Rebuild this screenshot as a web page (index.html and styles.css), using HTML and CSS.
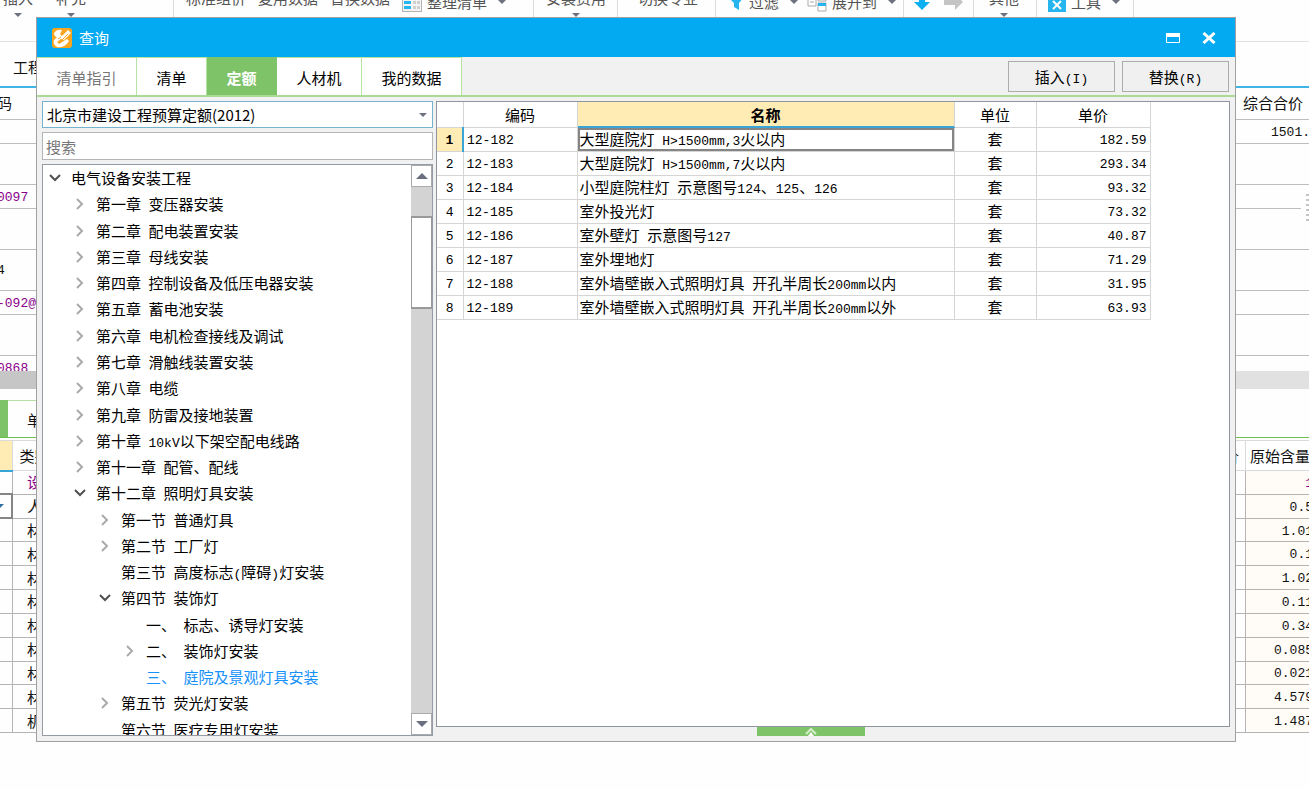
FILE: index.html
```html
<!DOCTYPE html>
<html lang="zh-CN">
<head>
<meta charset="utf-8">
<title>查询</title>
<link rel="stylesheet" href="styles.css">
</head>
<body>
<main class="app">
  <nav class="ribbon">
    <div class="group g-insert">
      <button class="stack">插入<i class="caret"></i></button>
      <button class="stack">补充<i class="caret"></i></button>
    </div>
    <div class="group g-data">
      <button class="stack">标准组价</button>
      <button class="stack">复用数据</button>
      <button class="stack">替换数据</button>
      <button class="inline">
        <svg width="20" height="20" viewBox="0 0 20 20"><rect x=".5" y=".5" width="19" height="19" fill="#f4f4f4" stroke="#b4b4b4"/><path d="M2 3h7v3H2zM2 9h7v3H2zM2 14h7v3H2z" fill="#25b5ef"/><path d="M11 3h3v3h-3zM15 3h3v3h-3zM11 9h3v3h-3zM15 9h3v3h-3zM11 14h3v3h-3zM15 14h3v3h-3z" fill="#d0d0d0"/></svg>
        整理清单<i class="caret"></i></button>
    </div>
    <div class="group g-fee"><button class="stack">安装费用<i class="caret"></i></button></div>
    <div class="group g-major"><button class="stack">切换专业</button></div>
    <div class="group g-filter">
      <button class="inline">
        <svg width="16" height="20" viewBox="0 0 16 20"><path d="M0 5h16l-5 6v7l-5-3v-4z" fill="#25b5ef"/></svg>
        过滤<i class="caret"></i></button>
      <button class="inline">
        <svg width="20" height="20" viewBox="0 0 20 20"><path d="M1 4h8v10H1zM11 3h8v6h-8zM11 11h8v8h-8z" fill="#fff" stroke="#aaa"/><path d="M11 11h8v3h-8z" fill="#25b5ef"/><path d="M3 10h4" stroke="#aaa"/></svg>
        展开到<i class="caret"></i></button>
    </div>
    <div class="group g-move">
      <button class="inline" aria-label="下移"><svg width="18" height="20" viewBox="0 0 18 20"><path d="M6 2h6v8h5l-8 8-8-8h5z" fill="#0cb0f2"/></svg></button>
      <button class="inline" aria-label="右移"><svg width="20" height="20" viewBox="0 0 20 20"><path d="M0 7h11V2l8 8-8 8v-5H0z" fill="#c4c4c4"/></svg></button>
    </div>
    <div class="group g-other"><button class="stack">其他<i class="caret"></i></button></div>
    <div class="group g-tool">
      <button class="inline">
        <svg width="18" height="20" viewBox="0 0 18 20"><path d="M0 2h18v18H0z" fill="#25b5ef"/><path d="M5 9l8 8M13 9l-8 8" stroke="#fff" stroke-width="2"/></svg>
        工具<i class="caret"></i></button>
    </div>
  </nav>

  <div class="project-bar">工程</div>

  <div class="upper-pane">
  <table class="upper">
    <colgroup><col class="u-code"><col><col class="u-price"></colgroup>
    <tr class="r31"><td>码</td><td></td><td>综合合价</td></tr>
    <tr class="r24"><td></td><td></td><td class="amount n">1501.</td></tr>
    <tr class="r41"><td></td><td></td><td></td></tr>
    <tr class="r24"><td class="purple n">0097</td><td></td><td></td></tr>
    <tr class="r41"><td></td><td></td><td></td></tr>
    <tr class="r41"><td class="n">4</td><td></td><td></td></tr>
    <tr class="r24"><td class="purple n">-092@</td><td></td><td></td></tr>
    <tr class="r41"><td></td><td></td><td></td></tr>
    <tr class="r24"><td class="purple n">0868</td><td></td><td></td></tr>
  </table>
  </div>
  <div class="splitter"></div>

  <div class="lower-tabs"><span class="on"></span><span class="tab">单</span></div>

  <table class="lower">
    <colgroup><col class="l-mark"><col class="l-kind"><col><col class="l-qty"></colgroup>
    <tr class="head"><td class="marked"></td><td>类别</td><td class="price">价</td><td>原始含量</td></tr>
    <tr class="purple"><td></td><td>设</td><td></td><td class="n">1</td></tr>
    <tr><td class="picked"><i class="tick"></i></td><td>人</td><td></td><td class="n">0.5</td></tr>
    <tr><td></td><td>材</td><td></td><td class="n">1.01</td></tr>
    <tr><td></td><td>材</td><td></td><td class="n">0.1</td></tr>
    <tr><td></td><td>材</td><td></td><td class="n">1.02</td></tr>
    <tr><td></td><td>材</td><td></td><td class="n">0.11</td></tr>
    <tr><td></td><td>材</td><td></td><td class="n">0.34</td></tr>
    <tr><td></td><td>材</td><td></td><td class="n">0.085</td></tr>
    <tr><td></td><td>材</td><td></td><td class="n">0.021</td></tr>
    <tr><td></td><td>材</td><td></td><td class="n">4.579</td></tr>
    <tr><td></td><td>机</td><td></td><td class="n">1.487</td></tr>
  </table>
  <div class="grip"></div>
</main>

<section class="dialog" role="dialog" aria-labelledby="dialog-title">
  <header class="titlebar">
    <svg width="20" height="20" viewBox="0 0 20 20"><rect width="20" height="20" rx="3" fill="#f9a51f"/><path d="M2 5c2-3 5-4 8-3L8 6l2 2 6-6 3 3-7 7-3-1-4 3 2 2 8-5 2 2c-3 5-7 7-12 6-3-2-4-4-3-7l3-3c-2 0-3-2-3-4z" fill="#fff"/><path d="M6 11l3-2M10 12l6-6" stroke="#f9a51f"/></svg>
    <h1 id="dialog-title">查询</h1>
    <button aria-label="最大化"><svg width="14" height="10" viewBox="0 0 14 10"><path d="M.5 .5h13v9H.5z" fill="none" stroke="#fff"/><path d="M0 0h14v4H0z" fill="#fff"/></svg></button>
    <button aria-label="关闭"><svg width="14" height="12" viewBox="0 0 14 12"><path d="M1.500 1l11 10M12.500 1l-11 10" stroke="#fff" stroke-width="3"/></svg></button>
  </header>

  <div class="tabbar">
    <button class="tab dim">清单指引</button>
    <button class="tab t-list">清单</button>
    <button class="tab t-quota active">定额</button>
    <button class="tab t-res">人材机</button>
    <button class="tab">我的数据</button>
    <div class="actions">
      <button>插入<span class="n">(I)</span></button>
      <button>替换<span class="n">(R)</span></button>
    </div>
  </div>

  <div class="content">
    <aside class="side">
      <div class="combo">
        <select aria-label="定额库"><option>北京市建设工程预算定额(2012)</option></select>
        <i class="caret"></i>
      </div>
      <input class="search" type="text" placeholder="搜索" aria-label="搜索">
      <div class="tree">
        <ul>
          <li class="d0 open"><svg viewBox="0 0 12 12"><path d="M1 3l5 5 5-5"/></svg>电气设备安装工程</li>
          <li class="d1"><svg viewBox="0 0 12 12"><path d="M3 1l5 5-5 5"/></svg>第一章&ensp;变压器安装</li>
          <li class="d1"><svg viewBox="0 0 12 12"><path d="M3 1l5 5-5 5"/></svg>第二章&ensp;配电装置安装</li>
          <li class="d1"><svg viewBox="0 0 12 12"><path d="M3 1l5 5-5 5"/></svg>第三章&ensp;母线安装</li>
          <li class="d1"><svg viewBox="0 0 12 12"><path d="M3 1l5 5-5 5"/></svg>第四章&ensp;控制设备及低压电器安装</li>
          <li class="d1"><svg viewBox="0 0 12 12"><path d="M3 1l5 5-5 5"/></svg>第五章&ensp;蓄电池安装</li>
          <li class="d1"><svg viewBox="0 0 12 12"><path d="M3 1l5 5-5 5"/></svg>第六章&ensp;电机检查接线及调试</li>
          <li class="d1"><svg viewBox="0 0 12 12"><path d="M3 1l5 5-5 5"/></svg>第七章&ensp;滑触线装置安装</li>
          <li class="d1"><svg viewBox="0 0 12 12"><path d="M3 1l5 5-5 5"/></svg>第八章&ensp;电缆</li>
          <li class="d1"><svg viewBox="0 0 12 12"><path d="M3 1l5 5-5 5"/></svg>第九章&ensp;防雷及接地装置</li>
          <li class="d1"><svg viewBox="0 0 12 12"><path d="M3 1l5 5-5 5"/></svg><span>第十章&ensp;<span class="n">10kV</span>以下架空配电线路</span></li>
          <li class="d1"><svg viewBox="0 0 12 12"><path d="M3 1l5 5-5 5"/></svg>第十一章&ensp;配管、配线</li>
          <li class="d1 open"><svg viewBox="0 0 12 12"><path d="M1 3l5 5 5-5"/></svg>第十二章&ensp;照明灯具安装</li>
          <li class="d2"><svg viewBox="0 0 12 12"><path d="M3 1l5 5-5 5"/></svg>第一节&ensp;普通灯具</li>
          <li class="d2"><svg viewBox="0 0 12 12"><path d="M3 1l5 5-5 5"/></svg>第二节&ensp;工厂灯</li>
          <li class="d2"><svg viewBox="0 0 12 12"></svg><span>第三节&ensp;高度标志<span class="n">(</span>障碍<span class="n">)</span>灯安装</span></li>
          <li class="d2 open"><svg viewBox="0 0 12 12"><path d="M1 3l5 5 5-5"/></svg>第四节&ensp;装饰灯</li>
          <li class="d3"><svg viewBox="0 0 12 12"></svg>一、&ensp;标志、诱导灯安装</li>
          <li class="d3"><svg viewBox="0 0 12 12"><path d="M3 1l5 5-5 5"/></svg>二、&ensp;装饰灯安装</li>
          <li class="d3 current"><svg viewBox="0 0 12 12"></svg>三、&ensp;庭院及景观灯具安装</li>
          <li class="d2"><svg viewBox="0 0 12 12"><path d="M3 1l5 5-5 5"/></svg>第五节&ensp;荧光灯安装</li>
          <li class="d2"><svg viewBox="0 0 12 12"></svg>第六节&ensp;医疗专用灯安装</li>
        </ul>
        <div class="scrollbar">
          <button aria-label="向上滚动"><i class="arrow up"></i></button>
          <div class="track"><div class="thumb"></div></div>
          <button aria-label="向下滚动"><i class="arrow"></i></button>
        </div>
      </div>
    </aside>

    <div class="main">
      <div class="sheet">
        <table class="items">
          <colgroup><col class="c-no"><col class="c-code"><col class="c-name"><col class="c-unit"><col class="c-cost"></colgroup>
          <thead><tr><th></th><th>编码</th><th class="hot">名称</th><th>单位</th><th>单价</th></tr></thead>
          <tbody>
            <tr class="sel"><th class="n">1</th><td class="n">12-182</td><td>大型庭院灯<span class="n"> H&gt;1500mm,3</span>火以内</td><td>套</td><td class="n">182.59</td></tr>
            <tr><th class="n">2</th><td class="n">12-183</td><td>大型庭院灯<span class="n"> H&gt;1500mm,7</span>火以内</td><td>套</td><td class="n">293.34</td></tr>
            <tr><th class="n">3</th><td class="n">12-184</td><td>小型庭院柱灯<span class="n"> </span>示意图号<span class="n">124</span>、<span class="n">125</span>、<span class="n">126</span></td><td>套</td><td class="n">93.32</td></tr>
            <tr><th class="n">4</th><td class="n">12-185</td><td>室外投光灯</td><td>套</td><td class="n">73.32</td></tr>
            <tr><th class="n">5</th><td class="n">12-186</td><td>室外壁灯<span class="n"> </span>示意图号<span class="n">127</span></td><td>套</td><td class="n">40.87</td></tr>
            <tr><th class="n">6</th><td class="n">12-187</td><td>室外埋地灯</td><td>套</td><td class="n">71.29</td></tr>
            <tr><th class="n">7</th><td class="n">12-188</td><td>室外墙壁嵌入式照明灯具<span class="n"> </span>开孔半周长<span class="n">200mm</span>以内</td><td>套</td><td class="n">31.95</td></tr>
            <tr><th class="n">8</th><td class="n">12-189</td><td>室外墙壁嵌入式照明灯具<span class="n"> </span>开孔半周长<span class="n">200mm</span>以外</td><td>套</td><td class="n">63.93</td></tr>
          </tbody>
        </table>
      </div>
      <button class="handle" aria-label="展开"><svg width="14" height="9" viewBox="0 0 14 9"><path d="M2 7l5-5 5 5" fill="none" stroke="#d4edca" stroke-width="2"/><path d="M4 9l3-4 3 4z" fill="#fff"/></svg></button>
    </div>
  </div>
</section>
</body>
</html>
```
FILE: styles.css
```css
* { box-sizing: border-box; }
body {
  margin: 0;
  min-height: 100vh;
  position: relative;
  overflow: hidden;
  background: #fefefe;
  color: #111;
  font: 15px/20px "Noto Sans CJK SC", sans-serif;
}
button, input, select { font: inherit; color: inherit; border-radius: 0; }
button { background: none; border: 0; padding: 0; }
table { border-collapse: collapse; table-layout: fixed; }
td, th { padding: 0; white-space: nowrap; overflow: hidden; font-weight: 400; }
.n { font-family: "Liberation Mono", monospace; font-size: 13px; white-space: pre; }
span.n { line-height: 1; }
.purple { color: #8b008b; }
.caret {
  display: inline-block;
  border: 4px solid transparent;
  border-top-color: #6d7180;
  border-bottom: 0;
}

/* background window */
.app { overflow: hidden; }
.ribbon {
  display: flex;
  height: 42px;
  overflow: hidden;
  border-bottom: 1px solid #e2e2e2;
  color: #555;
}
.group {
  display: flex;
  align-items: flex-start;
  flex: none;
  height: 42px;
  border-right: 1px solid #dcdcdc;
  white-space: nowrap;
}
.stack { display: flex; flex-direction: column; align-items: center; margin-top: -12px; }
.stack .caret { margin-top: 5px; }
.inline { display: flex; align-items: center; gap: 5px; margin-top: -8px; }
.inline .caret { margin-left: 6px; }
.g-insert { width: 174px; padding-left: 3px; gap: 23px; }
.g-data { width: 360px; padding-left: 12px; gap: 12px; }
.g-fee { width: 84px; padding-left: 12px; }
.g-major { width: 98px; padding-left: 20px; }
.g-filter { width: 188px; padding-left: 12px; gap: 9px; }
.g-move { width: 70px; padding-left: 9px; gap: 13px; }
.g-other { width: 63px; padding-left: 15px; }
.g-tool { width: 97px; padding-left: 11px; }
.project-bar { height: 46px; padding: 15px 13px 0; border-bottom: 2px solid #3fb4e6; }
.upper-pane { height: 283px; overflow: hidden; }
.upper { width: calc(100% + 3px); margin-left: -3px; }
.upper td { border-top: 1px solid #bdbdbd; }
.upper td.n { padding-top: 3px; }
.upper tr:first-child td { border-top: 0; }
.u-code { width: 60px; }
.u-price { width: 66px; }
.upper .amount { padding-left: 28px; }
.r24 { height: 24px; }
.r31 { height: 31px; }
.r41 { height: 41px; }
.splitter { height: 18px; background: linear-gradient(90deg, #c6c6c6 50%, #e1e1e1 50%); }
.lower-tabs {
  display: flex;
  height: 38px;
  margin-top: 11px;
  border-bottom: 1px solid #6cbf50;
}
.lower-tabs .on { width: 8px; background: #7fc369; }
.lower-tabs .tab { width: 90px; padding: 9px 19px; border-top: 1px solid #b5e0a4; }
.lower { width: calc(100% + 5px); height: 293px; margin-top: 2px; }
.lower td { border: 1px solid #b4b4b4; text-align: center; line-height: 18px; }
.lower td.n { padding-top: 3px; }
.lower tr.head { height: 30px; }
.lower tr.head td { border-color: #dadada; }
.lower td:first-child { border-left: 0; }
.lower td:last-child { text-align: right; background: #fffcf8; }
.lower .head td:last-child { text-align: left; padding-left: 4px; background: #fff; }
.lower td.price { text-align: right; padding-right: 6px; }
.lower .head .marked { background: #ffecb5; border-bottom: 2px solid #35a5d8; }
.lower .picked { border: 2px solid #858585; }
.tick { display: block; border: 4px solid transparent; border-top-color: #2f6ea5; border-bottom: 0; border-left: 0; width: 4px; }
.l-mark { width: 12px; }
.l-kind { width: 45px; }
.l-qty { width: 68px; }
.grip {
  position: absolute;
  top: 194px;
  right: 0;
  width: 8px;
  height: 27px;
  border-left: 5px solid #fefefe;
  background: repeating-linear-gradient(#c4c4c4 0 2px, #fefefe 2px 5px);
}

/* dialog */
.dialog {
  position: absolute;
  inset: 17px 73px 47px 36px;
  display: flex;
  flex-direction: column;
  border: 1px solid #a0a0a0;
  background: #f1f1f1;
  color: #000;
}
.titlebar {
  display: flex;
  align-items: center;
  flex: none;
  height: 39px;
  padding: 0 19px 0 15px;
  background: #03a9f1;
  color: #fff;
}
.titlebar h1 { margin: 0 auto 0 7px; font-size: 15px; font-weight: 400; }
.titlebar button { display: flex; margin-left: 22px; }
.tabbar {
  display: flex;
  flex: none;
  height: 40px;
  border-bottom: 2px solid #a9db97;
}
.tabbar .tab { width: 100px; background: #fff; border-right: 1px solid #b5e5a2; border-top: 1px solid #b5e5a2; padding-top: 2px; }
.tabbar .dim { color: #777; }
.tabbar .t-list, .tabbar .t-quota { width: 70px; }
.tabbar .t-res { width: 85px; }
.tabbar .active { background: #7fc369; border-color: #7fc369; color: #fff; font-weight: 700; }
.actions { display: flex; gap: 7px; margin: 4px 6px 3px auto; }
.actions button { width: 107px; border: 1px solid #acacac; background: #f0f0f0; }
.content { display: flex; flex: 1; min-height: 0; gap: 3px; padding: 4px 5px 5px; }
.side { display: flex; flex-direction: column; flex: none; width: 391px; gap: 4px; }
.combo { position: relative; height: 27px; }
.combo select {
  appearance: none;
  width: 100%;
  height: 27px;
  padding: 0 4px;
  border: 1px solid #76b3cf;
  background: #fff;
}
.combo .caret { position: absolute; right: 6px; top: 12px; }
.search { flex: none; height: 28px; padding: 0 3px; border: 1px solid #b5b5b5; background: #fff; }
.search::placeholder { color: #777; }
.tree {
  display: flex;
  flex: 1;
  min-height: 0;
  overflow: hidden;
  border: 1px solid #969ca6;
  background: #fff;
}
.tree ul {
  display: flex;
  flex: 1;
  flex-direction: column;
  height: 578px;
  margin: 0;
  padding: 0;
  list-style: none;
}
.tree li { display: flex; align-items: center; flex: 1; white-space: pre; }
.tree svg { flex: none; width: 12px; height: 12px; margin: 0 10px 0 6px; fill: none; stroke: #aaa; stroke-width: 2; }
.tree .open svg { stroke: #505050; }
.tree .d1 { padding-left: 25px; }
.tree .d2 { padding-left: 50px; }
.tree .d3 { padding-left: 75px; }
.tree .current { color: #1690fa; }
.scrollbar { display: flex; flex-direction: column; flex: none; width: 21px; background: #d3d3d3; }
.scrollbar button { display: grid; place-items: center; height: 22px; border: 1px solid #aaa; background: #fff; }
.track { flex: 1; padding-top: 29px; }
.thumb { height: 93px; border: 1px solid #999; border-width: 2px 1px; background: #fff; }
.arrow { border: 6px solid transparent; border-top-color: #6b7080; border-bottom: 0; }
.arrow.up { transform: rotate(180deg); }
.main { display: flex; flex-direction: column; flex: 1; min-width: 0; }
.sheet { flex: 1; border: 1px solid #8e959f; background: #fff; }
.handle { display: grid; place-items: center; width: 108px; height: 9px; margin-left: 321px; background: #7fc369; }
.items { width: 713px; }
.items td, .items th { height: 24px; border: 1px solid #d5d5d5; line-height: 20px; }
.items td.n, .items th.n { padding-top: 3px; }
.items tr > :first-child { border-left: 0; }
.items thead th { height: 25px; border-top: 0; padding-top: 2px; }
.items thead .hot { background: #ffecb5; box-shadow: inset 0 -1px #38a5d6; border-bottom-color: #38a5d6; font-weight: 700; }
.items td:nth-child(2) { padding-left: 3px; }
.items td:nth-child(3) { padding-left: 2px; }
.items td:nth-child(4) { text-align: center; }
.items td:nth-child(5) { text-align: right; padding-right: 3px; }
.items .sel th { background: #ffecb5; border-right: 2px solid #38a5d6; font-weight: 700; }
.items .sel td:nth-child(3) { box-shadow: inset 0 0 0 2px #858585; }
.c-no { width: 26px; }
.c-code { width: 114px; }
.c-name { width: 377px; }
.c-unit { width: 82px; }
.c-cost { width: 114px; }
```
